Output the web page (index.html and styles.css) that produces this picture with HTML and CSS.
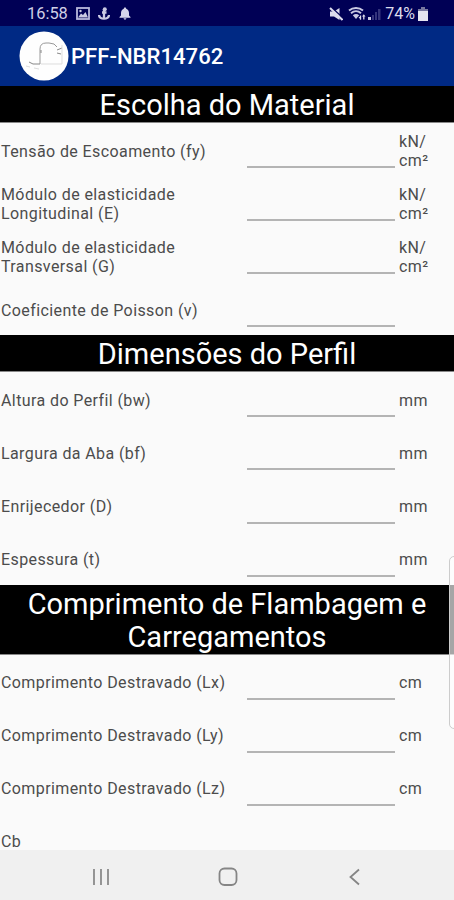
FILE: index.html
```html
<!DOCTYPE html>
<html lang="pt-BR">
<head>
    <meta charset="UTF-8">
    <title>PFF-NBR14762</title>
    <link rel="stylesheet" href="styles.css">
</head>
<body>
<div class="screen">
    <!-- status bar -->
    <div class="status">
        <span class="clock">16:58</span>
        <svg class="s-img" width="14" height="13" viewBox="0 0 14 13">
            <rect x="1" y="1" width="12" height="11" fill="none" stroke="#b9b9dc" stroke-width="1.800"/>
            <path d="M2 10.500l3-4 2 1.500 2.500-3 2.500 5.500z" fill="#c9c9e2"/>
            <circle cx="4.500" cy="4" r="1.200" fill="#c9c9e2"/>
        </svg>
        <svg class="s-app" width="12" height="13" viewBox="0 0 12 13">
            <path d="M6 2v9M4 5.500h4.500M1 8c.5 4.800 9.500 4.800 10 0" fill="none" stroke="#c9c9e2" stroke-width="2.300"/>
            <circle cx="6.800" cy="2.200" r="2" fill="#c9c9e2"/>
        </svg>
        <svg class="s-bell" width="12" height="13" viewBox="0 0 12 13">
            <path d="M6 0.500c.8 0 1.200.5 1.200 1.200C9.200 2.400 10 4 10 6v2.500L11.500 10v.7H.5V10L2 8.500V6c0-2 .8-3.600 2.800-4.300C4.800 1 5.200.5 6 .5zM4.600 11.300h2.800c0 1.800-2.800 1.800-2.800 0z" fill="#d4d4ea"/>
        </svg>
        <div class="status-right">
            <svg width="14" height="14" viewBox="0 0 14 14">
                <path d="M1 4.500h4L10.500 1v12L5 9.500H1z" fill="#dcdcec"/>
                <path d="M2.500.5l12 11" stroke="#000055" stroke-width="1.500"/>
                <path d="M1 1l12.500 12" stroke="#dcdcec" stroke-width="2"/>
            </svg>
            <svg class="s-wifi" width="34" height="14" viewBox="0 0 34 14">
                <path d="M1 3.500c4-3.300 10-3.300 14 0M3 6.200c3-2.600 7-2.600 10 0" fill="none" stroke="#c9c9e2" stroke-width="1.900"/>
                <path d="M4.800 8.200c2-1.600 4.400-1.600 6.400 0l-3.200 3.800z" fill="#c9c9e2"/>
                <path d="M10.500 10h2.500v3zM14 9.500l1.800-2.300 1.700 2.300z" fill="#dcdcec"/>
                <path d="M12.500 8.500v4M15.800 9v3.500" stroke="#dcdcec" stroke-width="1.300"/>
                <path d="M20 10h3v3h-3z" fill="#c9c9e2"/>
                <path d="M24 8h2v5h-2zM27 5h2v8h-2zM30 2h2.500v11H30z" fill="#34347c"/>
            </svg>
            <span class="percent">74%</span>
            <svg class="s-bat" width="10" height="14" viewBox="0 0 10 14">
                <path d="M3 0h4v2h3v3H0V2h3z" fill="#77779f"/>
                <path d="M0 4h10v10H0z" fill="#e4e4ef"/>
            </svg>
        </div>
    </div>

    <!-- title bar -->
    <div class="appbar">
        <svg width="50" height="50" viewBox="0 0 50 50">
            <circle cx="25" cy="25" r="24.500" fill="#fefefe"/>
            <g fill="none" stroke="#888" stroke-width="1">
                <path d="M21 33V18q0-6 6-6h3q6 0 8 4" stroke="#999"/>
                <path d="M22 19v3M38 19l5-2M38 22l4 1M10 31l4 2h7"/>
                <path d="M22 33h21V14M7 35l4 1M15 37l5 1" stroke="#ddd"/>
            </g>
        </svg>
        <span class="title">PFF-NBR14762</span>
    </div>

    <div class="content">
        <h2>Escolha do Material</h2>
        <div class="row"><label>Tensão de Escoamento (fy)</label><span class="field"></span><span class="unit">kN/<br>cm²</span></div>
        <div class="row"><label>Módulo de elasticidade<br>Longitudinal (E)</label><span class="field"></span><span class="unit">kN/<br>cm²</span></div>
        <div class="row"><label>Módulo de elasticidade<br>Transversal (G)</label><span class="field"></span><span class="unit">kN/<br>cm²</span></div>
        <div class="row"><label>Coeficiente de Poisson (v)</label><span class="field"></span><span class="unit"></span></div>

        <h2>Dimensões do Perfil</h2>
        <div class="row"><label>Altura do Perfil (bw)</label><span class="field"></span><span class="unit">mm</span></div>
        <div class="row"><label>Largura da Aba (bf)</label><span class="field"></span><span class="unit">mm</span></div>
        <div class="row"><label>Enrijecedor (D)</label><span class="field"></span><span class="unit">mm</span></div>
        <div class="row"><label>Espessura (t)</label><span class="field"></span><span class="unit">mm</span></div>

        <h2>Comprimento de Flambagem e Carregamentos</h2>
        <div class="row"><label>Comprimento Destravado (Lx)</label><span class="field"></span><span class="unit">cm</span></div>
        <div class="row"><label>Comprimento Destravado (Ly)</label><span class="field"></span><span class="unit">cm</span></div>
        <div class="row"><label>Comprimento Destravado (Lz)</label><span class="field"></span><span class="unit">cm</span></div>
        <div class="row last"><label>Cb</label></div>
    </div>

    <!-- navigation -->
    <div class="nav">
        <svg width="18" height="18" viewBox="0 0 18 18"><path d="M2 1v16M9 1v16M16 1v16" stroke="#8b8b8b" stroke-width="1.800"/></svg>
        <svg width="20" height="20" viewBox="0 0 20 20"><rect x="1.500" y="1.500" width="17" height="16.500" rx="5" fill="none" stroke="#858585" stroke-width="1.800"/></svg>
        <svg width="18" height="18" viewBox="0 0 18 18"><path d="M13 1.500L4.500 9l8.500 7.500" fill="none" stroke="#858585" stroke-width="1.800"/></svg>
    </div>

    <div class="edge"></div>
</div>
</body>
</html>
```

FILE: styles.css
```css
body, h2 {
    margin: 0;
    padding: 0;
}

body {
    font-family: Roboto, "Liberation Sans", sans-serif;
    background: #fafafa;
}

.screen {
    width: 454px;
    height: 900px;
    position: relative;
    overflow: hidden;
    display: flex;
    flex-direction: column;
}

.status {
    height: 26px;
    flex: none;
    box-sizing: border-box;
    padding: 1px 26px 0 27px;
    background: #000055;
    color: #d0d0e6;
    display: flex;
    align-items: center;
    font-size: 16.400px;
}

.s-img {
    margin-left: 8px;
}

.s-app {
    margin-left: 8px;
}

.s-bell {
    margin-left: 9px;
}

.status-right {
    margin-left: auto;
    display: flex;
    align-items: center;
}

.s-wifi {
    margin-left: 5px;
}

.percent {
    margin-left: 3px;
    color: #dcdcec;
    font-size: 16px;
}

.s-bat {
    margin-left: 3px;
}

.appbar {
    height: 60px;
    flex: none;
    box-sizing: border-box;
    padding-left: 19px;
    background: #002984;
    display: flex;
    align-items: center;
}

.title {
    margin-left: 2px;
    color: #fff;
    font-size: 22.100px;
    font-weight: 500;
}

.content {
    height: 764px;
    flex: none;
    overflow: hidden;
}

.content h2 {
    box-sizing: border-box;
    padding: 3px 20px 0;
    border-bottom: 1px solid #888;
    background: #000;
    color: #fff;
    font-size: 29px;
    font-weight: 400;
    line-height: 33px;
    text-align: center;
}

.row {
    height: 53.1px;
    display: flex;
    align-items: flex-start;
    color: #4c4c4c;
    font-size: 16px;
    line-height: 19px;
    letter-spacing: 0.4px;
}

.row label {
    width: 247px;
    height: 56px;
    box-sizing: border-box;
    padding-left: 1px;
    display: flex;
    align-items: center;
}

.field {
    width: 148px;
    height: 43px;
    border-bottom: 2px solid #b4b4b4;
}

.unit {
    width: 50px;
    height: 56px;
    margin-left: 4px;
    display: flex;
    align-items: center;
}

.last {
    line-height: 16px;
}

.last label {
    height: 55px;
}

.nav {
    height: 50px;
    flex: none;
    box-sizing: border-box;
    padding: 3px 90px 0 92px;
    background: #f0f0f0;
    display: flex;
    align-items: center;
    justify-content: space-between;
}

/* edge panel handle */
.edge {
    width: 10px;
    height: 173px;
    box-sizing: border-box;
    border: 1px solid #ccc;
    border-radius: 6px;
    background: rgba(255, 255, 255, 0.65);
    position: absolute;
    top: 556px;
    left: 449px;
}
```
